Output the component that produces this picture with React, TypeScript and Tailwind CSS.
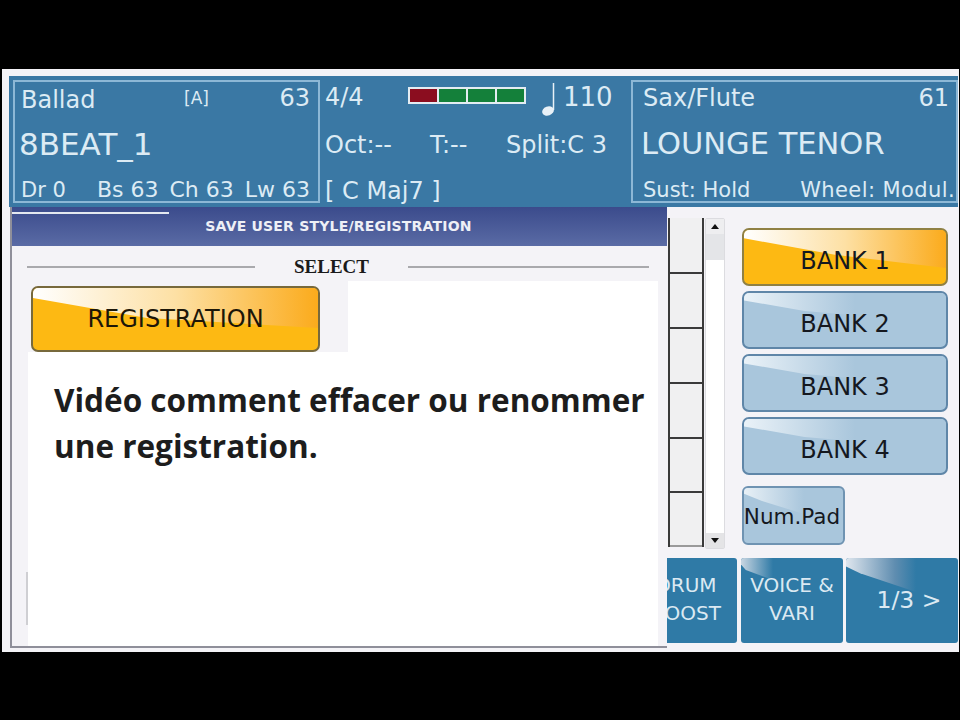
const dejavu = "font-['DejaVu_Sans',sans-serif]"

function BankButton({ label, active }: { label: string; active?: boolean }) {
  return (
    <div
      className={
        active
          ? 'relative flex h-[58px] items-center justify-center overflow-hidden rounded-[7px] border-2 border-[#8f8044] bg-[#fdb913]'
          : 'relative flex h-[58px] items-center justify-center overflow-hidden rounded-[7px] border-2 border-[#5f86a8] bg-[#a9c6dc]'
      }
    >
      <div
        className={
          active
            ? 'absolute left-0 top-0 h-[38px] w-full bg-[linear-gradient(90deg,#ffffff,#fde0a4_50%,#fbab1c)] [clip-path:polygon(0_0,100%_0,100%_100%,45%_65%,0_22%)]'
            : 'absolute left-0 top-0 h-[30px] w-full bg-[linear-gradient(90deg,#eaf2f8,#a9c6dc_55%)] [clip-path:polygon(0_0,100%_0,100%_100%,30%_60%,0_25%)]'
        }
      />
      <span className={`relative mt-[7px] text-[24px] leading-none text-[#15181f] ${dejavu}`}>{label}</span>
    </div>
  )
}

function Footer({
  lines,
  className,
  glossClass,
  textClass,
}: {
  lines: string[]
  className: string
  glossClass?: string
  textClass: string
}) {
  return (
    <div
      className={`relative flex flex-col items-center justify-center overflow-hidden rounded-[3px] bg-[#2f7aa6] text-[#dbe9f2] ${dejavu} ${className}`}
    >
      {glossClass && <div className={glossClass} />}
      {lines.map((line) => (
        <span key={line} className={`relative ${textClass}`}>
          {line}
        </span>
      ))}
    </div>
  )
}

export default function App() {
  return (
    <div className="flex h-[720px] w-[960px] flex-col overflow-hidden bg-black">
      <div className="mt-[69px] ml-[2px] flex h-[583px] w-[957px] flex-col bg-[#f4f3f7] pl-[7px] pr-[1px] pt-[7px]">
        {/* Header */}
        <div className={`flex h-[131px] bg-[#3a78a4] text-[#dcebf4] ${dejavu}`}>
          <div className="m-[4px] mr-0 flex w-[307px] flex-col border-2 border-[#8db8d6] pl-[6px] pr-[8px]">
            <div className="flex h-[37px] items-center">
              <span className="-mt-[2px] w-[163px] text-[24px]">Ballad</span>
              <span className="-mt-[3px] flex-1 text-[17px]">[A]</span>
              <span className="-mt-[5px] text-[24px]">63</span>
            </div>
            <div className="-ml-[2px] mt-[1px] flex h-[48px] items-center text-[31px]">8BEAT_1</div>
            <div className="mt-auto flex items-baseline gap-[11px] text-[22px] leading-[22px]">
              <span className="mr-auto text-[21px]">Dr 0</span>
              <span>Bs 63</span>
              <span>Ch 63</span>
              <span>Lw 63</span>
            </div>
          </div>
          <div className="flex w-[311px] flex-col pl-[5px] pt-[4px]">
            <div className="flex h-[37px] items-center">
              <span className="-mt-[4px] w-[83px] text-[24px]">4/4</span>
              <div className="-mt-[6px] flex h-[17px] w-[118px] gap-[2px] border-2 border-[#e4ecf2] bg-[#e4ecf2]">
                <div className="flex-1 bg-[#8b0d1f]" />
                <div className="flex-1 bg-[#14803a]" />
                <div className="flex-1 bg-[#14803a]" />
                <div className="flex-1 bg-[#14803a]" />
              </div>
              <svg viewBox="0 0 16 36" className="ml-[15px] mt-[1px] h-[36px] w-[16px]">
                <path d="M12.5 2v27" stroke="#e8f1f7" strokeWidth="1.5" />
                <ellipse cx="7" cy="30" rx="6" ry="4.5" fill="#e8f1f7" transform="rotate(-20 7 30)" />
              </svg>
              <span className="ml-[6px] -mt-[2px] text-[26px]">110</span>
            </div>
            <div className="mt-[4px] flex h-[48px] items-center text-[24px]">
              <span className="w-[105px]">Oct:--</span>
              <span className="w-[76px]">T:--</span>
              <span>Split:C 3</span>
            </div>
            <div className="mt-[7px] text-[24px] leading-[30px]">[ C Maj7 ]</div>
          </div>
          <div className="my-[4px] flex flex-1 flex-col border-2 border-[#8db8d6] pl-[10px] pr-[1px]">
            <div className="-mt-[2px] flex h-[36px] items-center justify-between pr-[6px]">
              <span className="text-[24px]">Sax/Flute</span>
              <span className="text-[24px]">61</span>
            </div>
            <div className="-ml-[2px] mt-[3px] flex h-[50px] items-center text-[30.5px]">LOUNGE TENOR</div>
            <div className="mt-auto flex justify-between text-[21px] leading-[22px]">
              <span>Sust: Hold</span>
              <span className="tracking-[0.4px]">Wheel: Modul.</span>
            </div>
          </div>
        </div>

        <div className="flex flex-1">
          {/* Dialog */}
          <div className="relative z-10 ml-[1px] flex h-[441px] w-[657px] flex-col border-b-2 border-l-2 border-[#8f8f9a] bg-[#f4f3f7]">
            <div className="relative flex h-[39px] items-center justify-center bg-[linear-gradient(180deg,#3b4b8c,#5a6ba5)]">
              <div className="absolute left-0 top-[5px] h-[2px] w-[157px] bg-[#e4e8f0]" />
              <span className={`ml-[-2px] text-[14px] font-bold tracking-[0.2px] text-[#eef0f6] ${dejavu}`}>
                SAVE USER STYLE/REGISTRATION
              </span>
            </div>
            <div className="flex h-[35px] items-center pl-[15px] pr-[18px] pt-[7px]">
              <div className="h-[2px] w-[228px] bg-[#a9a9ad]" />
              <span className="flex-1 text-center font-['Liberation_Serif',serif] text-[19px] font-bold text-[#1a1a1a]">
                SELECT
              </span>
              <div className="h-[2px] w-[241px] bg-[#a9a9ad]" />
            </div>
            <div className="relative flex-1">
              <div className="absolute inset-y-0 left-[16px] right-[9px] bg-white" />
              <div className="absolute left-[14px] top-[291px] h-[53px] w-[2px] bg-[#cfcfd3]" />
              <div className="relative h-[71px] w-[336px] bg-[#f4f3f7] pl-[19px] pt-[5px]">
                <div className="relative flex h-[66px] w-[289px] items-center justify-center overflow-hidden rounded-[7px] border-2 border-[#77693c] bg-[#fdb913]">
                  <div className="absolute left-0 top-0 h-[40px] w-full bg-[linear-gradient(90deg,#ffffff,#fde0a4_50%,#fbab1c)] [clip-path:polygon(0_0,100%_0,100%_100%,40%_75%,0_25%)]" />
                  <span className={`relative text-[24px] text-[#1c1608] ${dejavu}`}>REGISTRATION</span>
                </div>
              </div>
              <p className="relative ml-[42px] mt-[25px] font-['Open_Sans',sans-serif] text-[31.5px] font-bold leading-[46px] text-[#1d1d1d]">
                Vidéo comment effacer ou renommer
                <br />
                une registration.
              </p>
            </div>
          </div>

          {/* Right panel */}
          <div className="flex flex-1 flex-col">
            <div className="flex h-[351px]">
              <div className="mt-[11px] ml-[1px] flex h-[329px] w-[36px] flex-col border-x-2 border-[#3a3a3a] bg-[#f0f0f1]">
                <div className="h-[56px] border-b-2 border-[#3a3a3a]" />
                <div className="h-[55px] border-b-2 border-[#3a3a3a]" />
                <div className="h-[55px] border-b-2 border-[#3a3a3a]" />
                <div className="h-[55px] border-b-2 border-[#3a3a3a]" />
                <div className="h-[54px] border-b-2 border-[#3a3a3a]" />
                <div className="flex-1 border-b-2 border-[#9a9a9a]" />
              </div>
              <div className="mt-[11px] ml-[1px] flex h-[331px] w-[20px] flex-col items-center rounded-[2px] border border-[#dcdce0] bg-white">
                <div className="flex h-[15px] w-full items-center justify-center bg-[#eeeef0]">
                  <div className="h-0 w-0 border-x-[4px] border-b-[5px] border-x-transparent border-b-[#111]" />
                </div>
                <div className="h-[26px] w-full bg-[#e4e5e8]" />
                <div className="flex-1" />
                <div className="flex h-[15px] w-full items-center justify-center bg-[#e4e4e6]">
                  <div className="h-0 w-0 border-x-[4px] border-t-[5px] border-x-transparent border-t-[#111]" />
                </div>
              </div>
              <div className="ml-[17px] mt-[21px] flex w-[206px] flex-col gap-[5px]">
                <BankButton label="BANK 1" active />
                <BankButton label="BANK 2" />
                <BankButton label="BANK 3" />
                <BankButton label="BANK 4" />
                <div className="relative mt-[6px] flex h-[59px] w-[103px] items-center justify-center overflow-hidden rounded-[6px] border-2 border-[#6f93b2] bg-[#a9c6dc]">
                  <div className="absolute left-0 top-0 h-[26px] w-[60px] bg-[linear-gradient(90deg,#e8f0f6,#a9c6dc)] [clip-path:polygon(0_0,100%_0,100%_100%,30%_50%,0_22%)]" />
                  <span className={`relative mt-[3px] -ml-[3px] text-[21.5px] leading-none text-[#15181f] ${dejavu}`}>Num.Pad</span>
                </div>
              </div>
            </div>
            <div className="flex h-[85px] gap-[4px]">
              <Footer
                lines={['DRUM', 'BOOST']}
                className="-ml-[32px] w-[102px] shrink-0 pb-[4px]"
                textClass="text-[20px] leading-[28px]"
              />
              <Footer
                lines={['VOICE &', 'VARI']}
                className="w-[102px] pb-[4px]"
                glossClass="absolute left-0 top-0 h-[22px] w-[32px] bg-[linear-gradient(90deg,#c9d6e2,#2f7aa6)] [clip-path:polygon(0_0,100%_0,100%_100%,15%_55%,0_30%)]"
                textClass="text-[20px] leading-[28px]"
              />
              <Footer
                lines={['1/3 >']}
                className="-ml-[1px] w-[112px] pl-[14px]"
                glossClass="absolute left-0 top-0 h-[34px] w-[70px] bg-[linear-gradient(90deg,#dfe6ee,#5f8db0_70%,#2f7aa6)] [clip-path:polygon(0_0,100%_0,100%_100%,20%_45%,0_25%)]"
                textClass="text-[23.5px]"
              />
            </div>
          </div>
        </div>
      </div>
    </div>
  )
}
